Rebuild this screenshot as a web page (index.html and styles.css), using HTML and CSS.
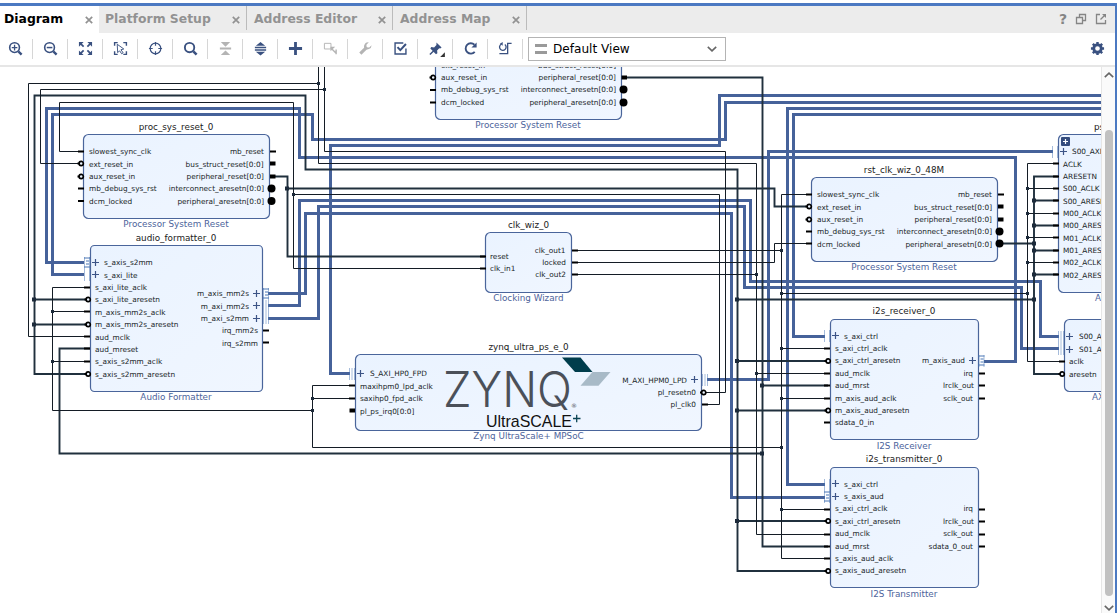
FILE: index.html
```html
<!DOCTYPE html>
<html lang="en">
<head>
<meta charset="utf-8">
<title>Diagram</title>
<link rel="stylesheet" href="styles.css">
</head>
<body>
<main class="panel">
  <nav class="tabs">
    <div class="tab tab-active"><span>Diagram</span><svg class="close" viewBox="0 0 8 8"><path d="M.8 .8 7.2 7.2M7.2 .8 .8 7.2"/></svg></div>
    <div class="tab tab-platform"><span>Platform Setup</span><svg class="close" viewBox="0 0 8 8"><path d="M.8 .8 7.2 7.2M7.2 .8 .8 7.2"/></svg></div>
    <div class="tab tab-editor"><span>Address Editor</span><svg class="close" viewBox="0 0 8 8"><path d="M.8 .8 7.2 7.2M7.2 .8 .8 7.2"/></svg></div>
    <div class="tab tab-map"><span>Address Map</span><svg class="close" viewBox="0 0 8 8"><path d="M.8 .8 7.2 7.2M7.2 .8 .8 7.2"/></svg></div>
    <div class="window-tools">
      <b>?</b>
      <svg viewBox="0 0 12 12"><path d="M4.5 4V1.5h6v6H8M1.5 4.5h6v6h-6z"/></svg>
      <svg viewBox="0 0 12 12"><path d="M5 1.5H1.5v9h9V7M5.5 6.5 9.8 2.2"/><path class="solid" d="M7 1h4v4z"/></svg>
    </div>
  </nav>
  <div class="toolbar">
    <span class="tool"><svg viewBox="0 0 16 16"><circle cx="7" cy="7" r="5.2" stroke-width="1.7"/><path d="M4 7h6M7 4v6" stroke-width="1.4"/><path d="m11 11 3.5 3.5" stroke-width="2.5"/></svg></span>
    <span class="tool"><svg viewBox="0 0 16 16"><circle cx="7" cy="7" r="5.2" stroke-width="1.7"/><path d="M4 7h6" stroke-width="1.6"/><path d="m11 11 3.5 3.5" stroke-width="2.5"/></svg></span>
    <span class="tool"><svg viewBox="0 0 16 16"><path d="m2.5 2.5 3.5 3.5M13.5 2.5 10 6M2.5 13.5 6 10M13.5 13.5 10 10" stroke-width="1.8"/><path class="solid" d="M1 1h5L1 6zM15 1v5l-5-5zM1 15v-5l5 5zM15 15h-5l5-5z"/></svg></span>
    <span class="tool"><svg viewBox="0 0 16 16"><path d="M1.7 5V1.7H5M11 1.7h3.3V5M1.7 11v3.3H5M11 14.3h3.3V11" stroke-width="1.5"/><path d="m4.5 3.5 7 5-3 .8 2.3 3.3-1.6 1L7 10.4l-2 2z" stroke-width="1"/></svg></span>
    <span class="tool"><svg viewBox="0 0 16 16"><circle cx="8" cy="8" r="5.7" stroke-width="1.3"/><path d="M8 1v4M8 11v4M1 8h4M11 8h4" stroke-width="1.3"/></svg></span>
    <span class="tool"><svg viewBox="0 0 16 16"><circle cx="7" cy="7" r="5" stroke-width="2"/><path d="m11 11 3.5 3.5" stroke-width="2.7"/></svg></span>
    <span class="tool tool-off"><svg viewBox="0 0 16 16"><path class="solid" d="M3 1h10L8 6zM2 7h12v2H2zM8 10l5 5H3z"/></svg></span>
    <span class="tool"><svg viewBox="0 0 16 16"><path class="solid" d="M8 1l5 4H3zM2 6h12v1.7H2zM2 8.8h12v1.7H2zM3 11.5h10l-5 4z"/></svg></span>
    <span class="tool"><svg viewBox="0 0 16 16"><path d="M8 1v14M1 8h14" stroke-width="3"/></svg></span>
    <span class="tool tool-off"><svg viewBox="0 0 16 16"><path d="M1.5 2.5h7v6h-7z" stroke-width="1"/><path d="m9 8 5 5M14 9v5" stroke-width="1.5"/><path class="solid" d="M8 6h5l-5 5z"/></svg></span>
    <span class="tool tool-off"><svg viewBox="0 0 16 16"><path d="m2.5 13.5 7-7" stroke-width="3.3"/><path class="solid" d="M14.5 4.5 12 7H9V4l2.5-2.6A4.5 4.5 0 0 0 6.7 7.500 4.500 4.500 0 0 0 14.500 4.500z"/></svg></span>
    <span class="tool"><svg viewBox="0 0 16 16"><path d="M11 2.200H2.200v11.600h11.600V8" stroke-width="1.500"/><path d="m4.800 6.500 3 3.200 6-6.500" stroke-width="2.200"/></svg></span>
    <span class="tool"><svg viewBox="0 0 16 16"><path d="M2 14.500 7 9.500" stroke-width="1.500"/><path class="solid" d="m9 1.500 5.500 5.500-1.500 1-1-.3-2.300 2.300.3 3L8.500 14 2.500 8l1-1.500 3 .3L9 4.300z"/><path class="corner" d="M18 12v5h-5z"/></svg></span>
    <span class="tool"><svg viewBox="0 0 16 16"><path d="M12.500 11.500a5.500 5.500 0 1 1-.3-7.500" stroke-width="2"/><path class="solid" d="M14.500 1.500v5.500H9z"/></svg></span>
    <span class="tool"><svg viewBox="0 0 16 16"><path d="M3.300 3.500a3.500 3.500 0 1 0 4 .2M1.500 13.500h8.800v-11h4.200" stroke-width="1.400"/><path class="solid" d="M5 1v4L2 3z"/></svg></span>
    <div class="view-select">
      <i></i><span>Default View</span>
      <svg viewBox="0 0 10 6"><path d="m.8.8 4.200 4L9.200.8"/></svg>
    </div>
    <svg class="gear" viewBox="0 0 16 16"><circle cx="8" cy="8" r="4" stroke-width="3"/><path d="M8 1v2.500M8 12.500V15M1 8h2.500M12.500 8H15M3 3l2 2M11 11l2 2M13 3l-2 2M5 11l-2 2" stroke-width="2.600"/></svg>
  </div>
  <div class="workspace">
    <svg class="diagram" viewBox="0 67 1101 546" width="1101" height="546">
      <defs>
        <linearGradient id="face" x1="0" y1="0" x2="1" y2="1"><stop offset="0" stop-color="#eaf3ff"/><stop offset="1" stop-color="#f0f6ff"/></linearGradient>
        <path id="tick" class="pin" d="M-5 0H1"/>
        <path id="stub" class="pin-bus" d="M-5.500 0H0"/>
        <g id="ring"><path class="pin" d="M-6 0h2"/><circle class="pin-ring" cx="-2.300" cy="0" r="2.100"/></g>
        <circle id="dot" cx="0" cy="0" r="4"/>
        <path id="plus" class="plus" d="M-3.500 0h7M0-3.500v7"/>
        <path id="port" class="dotted" d="M-2.500-5v11M2.500-5v11"/>
        <g id="port3"><path class="dotted" d="M-2.500-5v11M0-5v11M2.500-5v11"/></g>
        <g id="stream"><path class="dotted" d="M-2.500-5v11M2.500-5v11"/><path class="bars" d="M-3-4.500h6M-1-1.500h3M-1 1.500h3M-3 4.500h6"/></g>
      </defs>

      <g class="blocks">
        <rect x="435.500" y="40" width="186" height="79.500" rx="5"/>
        <rect x="83.500" y="134.500" width="186" height="84" rx="5"/>
        <rect x="90.500" y="245.500" width="172" height="146" rx="4"/>
        <rect x="485.500" y="232.500" width="86" height="60" rx="5"/>
        <rect x="355.500" y="354.500" width="346" height="76" rx="5"/>
        <rect x="811.500" y="177.500" width="186" height="84" rx="5"/>
        <rect x="830.500" y="319.500" width="148" height="120" rx="4"/>
        <rect x="830.500" y="467.500" width="148" height="120" rx="4"/>
        <rect x="1058.500" y="134.500" width="120" height="158" rx="5"/>
        <rect x="1064.500" y="319.500" width="120" height="72" rx="5"/>
      </g>

      <g class="bus">
        <path d="M84 262.500H46.500V108.500H299.500V157.500H1015.500V361.500H984"/>
        <path d="M84 274.500H52.500V114.500H312.500V139.500H725.500V102.500H1101"/>
        <path d="M350 373.500H330.500V145.500H719.500V95.500H1101"/>
        <path d="M825 484.500H787.500V108.500H1101"/>
        <path d="M825 336.500H793.500V114.500H1101"/>
        <path d="M707 379.500H768.500V151.500H1053"/>
        <path d="M268 293.500H305.500V213.500H731.500V497.500H825"/>
        <path d="M268 305.500H299.500V200.500H750.500V281.500H1040.500V336.500H1059"/>
        <path d="M268 318.500H318.500V206.500H744.500V287.500H1021.500V348.500H1059"/>
      </g>

      <g class="net">
        <path d="M86 374H34.500V95.500H305.500V169.500H737.500V571H826M34.500 299.500H86M34.500 324.500H86"/>
        <path d="M737.500 299.500H1034.500M737.500 361H826M737.500 410.500H826M737.500 521H826"/>
        <path d="M1058 176.500H1034V374H1060M1034 200.500H1058M1034 225.500H1058M1034 250.500H1058M1034 274.500H1058M1001 243.500H1034"/>
        <path d="M624 77.500H762.500V546.500H828M762.500 385.500H828M90 348.500H59.500V453.500H762.500"/>
        <path d="M272 176.500H287.500V256.500H485M287.500 188.500H774.500V206.500H806"/>
      </g>

      <g class="wire">
        <path d="M90 336.500H28.500V83.500H318.500M318.500 67V163.500H756.500V534.500H830M756.500 373.500H830"/>
        <path d="M324.500 67V151.500H725.500V392.500H706M324.500 89.500H40.500V163.500H80"/>
        <path d="M83 151.500H59.500V102.500H293.500V268.500H485M293.500 194.500H719.500V404.500H702"/>
        <path d="M90 287.500H52.500V410.500H312.500M52.500 311.500H90M52.500 361.500H90M355 385.500H312.500V447.500H781.500M312.500 398.500H355"/>
        <path d="M811 194.500H781.500V558.500H830M572 250.500H781.500M781.500 293.500H1027.500M781.500 348.500H830M781.500 398.500H830M781.500 509.500H830"/>
        <path d="M572 262.500H774.500V243.500H811M572 274.500H756.500"/>
        <path d="M1058 163.500H1027.500V361.500H1064M1027.500 188.500H1058M1027.500 213.500H1058M1027.500 237.500H1058M1027.500 262.500H1058"/>
      </g>

      <path class="joint" d="M318.500 83.500h0M324.500 89.500h0M293.500 194.500h0M52.500 311.500h0M52.500 361.500h0M312.500 398.500h0M312.500 410.500h0M781.500 250.500h0M781.500 293.500h0M781.500 348.500h0M781.500 398.500h0M781.500 447.500h0M781.500 509.500h0M756.500 274.500h0M756.500 373.500h0M1027.500 188.500h0M1027.500 213.500h0M1027.500 237.500h0M1027.500 262.500h0M1027.500 293.500h0"/>
      <path class="joint joint-big" d="M34 299.500h0M34 324.500h0M287 188.500h0M737 299.500h0M737 361h0M737 410.500h0M737 521h0M762 385.500h0M762 453.500h0M1034 200.500h0M1034 225.500h0M1034 243.500h0M1034 250.500h0M1034 274.500h0M1034 299.500h0"/>

      <g>
        <use href="#ring" x="435.500" y="77.500"/><use href="#tick" x="435" y="90"/><use href="#tick" x="435" y="102.500"/>
        <use href="#stub" x="627" y="77.500"/><use href="#dot" x="623.500" y="89.500"/><use href="#dot" x="623.500" y="102.500"/>
        <use href="#tick" x="83" y="151.500"/><use href="#ring" x="83.500" y="163.500"/><use href="#ring" x="83.500" y="176.500"/><use href="#tick" x="83" y="188.500"/><use href="#tick" x="83" y="201"/>
        <use href="#tick" x="275" y="151.500"/><use href="#stub" x="275.500" y="163.500"/><use href="#stub" x="275.500" y="176.500"/><use href="#dot" x="271.500" y="188.500"/><use href="#dot" x="271.500" y="201"/>
        <use href="#tick" x="811" y="194.500"/><use href="#ring" x="811.500" y="206.500"/><use href="#ring" x="811.500" y="219.500"/><use href="#tick" x="811" y="231.500"/><use href="#tick" x="811" y="243.500"/>
        <use href="#tick" x="1003" y="194.500"/><use href="#stub" x="1003.500" y="206.500"/><use href="#stub" x="1003.500" y="219.500"/><use href="#dot" x="999.500" y="231.500"/><use href="#dot" x="999.500" y="243.500"/>
        <use href="#tick" x="89" y="287.500"/><use href="#ring" x="90.500" y="299.500"/><use href="#tick" x="89" y="311.500"/><use href="#ring" x="90.500" y="324.500"/><use href="#tick" x="89" y="336.500"/><use href="#tick" x="89" y="348.500"/><use href="#tick" x="89" y="361.500"/><use href="#ring" x="90.500" y="374"/>
        <use href="#tick" x="268" y="330.500"/><use href="#tick" x="268" y="342.500"/>
        <use href="#tick" x="485" y="256.500"/><use href="#tick" x="485" y="268.500"/><use href="#tick" x="577" y="250.500"/><use href="#tick" x="577" y="262.500"/><use href="#tick" x="577" y="274.500"/>
        <use href="#tick" x="354" y="385.500"/><use href="#tick" x="354" y="398.500"/><use href="#stub" x="355" y="410.500"/><use href="#ring" x="706" y="392.500"/><use href="#tick" x="707" y="404.500"/>
        <use href="#tick" x="829" y="348.500"/><use href="#ring" x="830.500" y="361"/><use href="#tick" x="829" y="373.500"/><use href="#tick" x="829" y="385.500"/><use href="#tick" x="829" y="398.500"/><use href="#ring" x="830.500" y="410.500"/><use href="#tick" x="829" y="422.500"/>
        <use href="#tick" x="984" y="373.500"/><use href="#tick" x="984" y="385.500"/><use href="#tick" x="984" y="398.500"/>
        <use href="#tick" x="829" y="509.500"/><use href="#ring" x="830.500" y="521"/><use href="#tick" x="829" y="534.500"/><use href="#tick" x="829" y="546.500"/><use href="#tick" x="829" y="558.500"/><use href="#ring" x="830.500" y="571"/>
        <use href="#tick" x="984" y="509.500"/><use href="#tick" x="984" y="521.500"/><use href="#tick" x="984" y="534.500"/><use href="#tick" x="984" y="546.500"/>
        <use href="#tick" x="1058" y="163.500"/><use href="#tick" x="1058" y="176.500"/><use href="#tick" x="1058" y="188.500"/><use href="#tick" x="1058" y="200.500"/><use href="#tick" x="1058" y="213.500"/><use href="#tick" x="1058" y="225.500"/><use href="#tick" x="1058" y="237.500"/><use href="#tick" x="1058" y="250.500"/><use href="#tick" x="1058" y="262.500"/><use href="#tick" x="1058" y="274.500"/>
        <use href="#tick" x="1064" y="361.500"/><use href="#ring" x="1064.500" y="374"/>
      </g>
      <g>
        <use href="#stream" x="87" y="262.500"/><use href="#port" x="87" y="274.500"/><use href="#plus" x="95.500" y="262.500"/><use href="#plus" x="95.500" y="274.500"/>
        <use href="#stream" x="266" y="293.500"/><use href="#port3" x="266" y="305.500"/><use href="#port3" x="266" y="317.500"/><use href="#plus" x="256.500" y="293.500"/><use href="#plus" x="256.500" y="305.500"/><use href="#plus" x="256.500" y="318.500"/>
        <use href="#port3" x="352" y="373.500"/><use href="#plus" x="360.500" y="373.500"/><use href="#port3" x="705" y="379.500"/><use href="#plus" x="694.500" y="379.500"/>
        <use href="#port" x="827" y="335.500"/><use href="#plus" x="835.500" y="335.500"/><use href="#stream" x="981.500" y="360.500"/><use href="#plus" x="972.500" y="360.500"/>
        <use href="#port" x="827" y="484.500"/><use href="#plus" x="835.500" y="483.500"/><use href="#stream" x="827" y="496.500"/><use href="#plus" x="835.500" y="496.500"/>
        <use href="#port" x="1055" y="151.500"/><use href="#plus" x="1063.500" y="151.500"/>
        <use href="#port3" x="1061" y="336.500"/><use href="#port3" x="1061" y="348.500"/><use href="#plus" x="1069.500" y="336.500"/><use href="#plus" x="1069.500" y="349.500"/>
        <rect class="expand" x="1061" y="137" width="9" height="9" rx="1"/><path class="expand-plus" d="M1063 141.500h5M1065.500 139v5"/>
      </g>

      <g class="name">
        <text x="176" y="130">proc_sys_reset_0</text><text x="176" y="241">audio_formatter_0</text><text x="528.500" y="228">clk_wiz_0</text><text x="528.500" y="350">zynq_ultra_ps_e_0</text><text x="904" y="173">rst_clk_wiz_0_48M</text><text x="904" y="314">i2s_receiver_0</text><text x="904" y="462">i2s_transmitter_0</text><text class="from" x="1094" y="130">ps8_0_axi_periph</text>
      </g>
      <g class="kind">
        <text x="528" y="128">Processor System Reset</text><text x="176" y="227">Processor System Reset</text><text x="176" y="400">Audio Formatter</text><text x="528.500" y="301">Clocking Wizard</text><text x="528.500" y="439">Zynq UltraScale+ MPSoC</text><text x="904" y="270">Processor System Reset</text><text x="904" y="449">I2S Receiver</text><text x="904" y="597">I2S Transmitter</text><text class="from" x="1095" y="301">AXI Interconnect</text><text class="from" x="1092" y="400">AXI SmartConnect</text>
      </g>
      <g class="label">
        <text x="441" y="68">ext_reset_in</text><text x="441" y="80">aux_reset_in</text><text x="441" y="92">mb_debug_sys_rst</text><text x="441" y="105">dcm_locked</text>
        <text x="89" y="154">slowest_sync_clk</text><text x="89" y="167">ext_reset_in</text><text x="89" y="179">aux_reset_in</text><text x="89" y="191">mb_debug_sys_rst</text><text x="89" y="204">dcm_locked</text>
        <text x="817" y="197">slowest_sync_clk</text><text x="817" y="210">ext_reset_in</text><text x="817" y="222">aux_reset_in</text><text x="817" y="234">mb_debug_sys_rst</text><text x="817" y="247">dcm_locked</text>
        <text x="104" y="265">s_axis_s2mm</text><text x="104" y="278">s_axi_lite</text><text x="95" y="290">s_axi_lite_aclk</text><text x="95" y="302">s_axi_lite_aresetn</text><text x="95" y="315">m_axis_mm2s_aclk</text><text x="95" y="327">m_axis_mm2s_aresetn</text><text x="95" y="340">aud_mclk</text><text x="95" y="352">aud_mreset</text><text x="95" y="364">s_axis_s2mm_aclk</text><text x="95" y="377">s_axis_s2mm_aresetn</text>
        <text x="490" y="259">reset</text><text x="490" y="271">clk_in1</text>
        <text x="370" y="376">S_AXI_HP0_FPD</text><text x="360" y="389">maxihpm0_lpd_aclk</text><text x="360" y="401">saxihp0_fpd_aclk</text><text x="360" y="414">pl_ps_irq0[0:0]</text>
        <text x="844" y="339">s_axi_ctrl</text><text x="835" y="351">s_axi_ctrl_aclk</text><text x="835" y="363">s_axi_ctrl_aresetn</text><text x="835" y="376">aud_mclk</text><text x="835" y="388">aud_mrst</text><text x="835" y="401">m_axis_aud_aclk</text><text x="835" y="413">m_axis_aud_aresetn</text><text x="835" y="425">sdata_0_in</text>
        <text x="844" y="487">s_axi_ctrl</text><text x="844" y="499">s_axis_aud</text><text x="835" y="511">s_axi_ctrl_aclk</text><text x="835" y="524">s_axi_ctrl_aresetn</text><text x="835" y="536">aud_mclk</text><text x="835" y="549">aud_mrst</text><text x="835" y="561">s_axis_aud_aclk</text><text x="835" y="573">s_axis_aud_aresetn</text>
        <text x="1072" y="154">S00_AXI</text><text x="1063" y="167">ACLK</text><text x="1063" y="179">ARESETN</text><text x="1063" y="191">S00_ACLK</text><text x="1063" y="204">S00_ARESETN</text><text x="1063" y="216">M00_ACLK</text><text x="1063" y="228">M00_ARESETN</text><text x="1063" y="241">M01_ACLK</text><text x="1063" y="253">M01_ARESETN</text><text x="1063" y="265">M02_ACLK</text><text x="1063" y="278">M02_ARESETN</text>
        <text x="1079" y="339">S00_AXI</text><text x="1079" y="352">S01_AXI</text><text x="1069" y="364">aclk</text><text x="1069" y="377">aresetn</text>
      </g>
      <g class="label label-out">
        <text x="616" y="68">bus_struct_reset[0:0]</text><text x="616" y="80">peripheral_reset[0:0]</text><text x="616" y="92">interconnect_aresetn[0:0]</text><text x="616" y="105">peripheral_aresetn[0:0]</text>
        <text x="264" y="154">mb_reset</text><text x="263.500" y="167">bus_struct_reset[0:0]</text><text x="264" y="179">peripheral_reset[0:0]</text><text x="264" y="191">interconnect_aresetn[0:0]</text><text x="264" y="204">peripheral_aresetn[0:0]</text>
        <text x="992" y="197">mb_reset</text><text x="992" y="210">bus_struct_reset[0:0]</text><text x="992" y="222">peripheral_reset[0:0]</text><text x="992" y="234">interconnect_aresetn[0:0]</text><text x="992" y="247">peripheral_aresetn[0:0]</text>
        <text x="249" y="296">m_axis_mm2s</text><text x="249" y="309">m_axi_mm2s</text><text x="249" y="321">m_axi_s2mm</text><text x="258" y="333">irq_mm2s</text><text x="258" y="346">irq_s2mm</text>
        <text x="565.500" y="253">clk_out1</text><text x="566" y="265">locked</text><text x="566" y="277">clk_out2</text>
        <text x="687" y="383">M_AXI_HPM0_LPD</text><text x="696" y="395">pl_resetn0</text><text x="696" y="407">pl_clk0</text>
        <text x="965" y="363">m_axis_aud</text><text x="973" y="376">irq</text><text x="974" y="388">lrclk_out</text><text x="973" y="401">sclk_out</text>
        <text x="973" y="511">irq</text><text x="974" y="524">lrclk_out</text><text x="973" y="536">sclk_out</text><text x="973" y="549">sdata_0_out</text>
      </g>

      <g>
        <text class="zynq" x="443" y="407" textLength="129" lengthAdjust="spacingAndGlyphs">ZYNQ</text>
        <text class="registered" x="571" y="408">®</text>
        <text class="ultrascale" x="486" y="427" textLength="86" lengthAdjust="spacingAndGlyphs">UltraSCALE</text>
        <path class="mark-plus" d="M573 418.500h7.500M576.700 414.700v7.500"/>
        <path class="mark-dark" d="M562 357.500h18.500l12 14.500h-17.500z"/>
        <path class="mark-light" d="M592.500 372h18l-12 13.700h-18z"/>
      </g>
    </svg>
    <div class="scrollbar">
      <svg viewBox="0 0 10 6"><path d="m.8 5.200 4.200-4 4.200 4"/></svg>
      <i></i>
      <svg viewBox="0 0 10 6"><path d="m.8.8 4.200 4L9.200.8"/></svg>
    </div>
  </div>
</main>
</body>
</html>
```
FILE: styles.css
```css
* { box-sizing: border-box; }
body {
  margin: 0;
  background: #fff;
  font-family: "DejaVu Sans", sans-serif;
  overflow: hidden;
}
svg { display: block; fill: none; }
.panel {
  display: flex;
  flex-direction: column;
  width: 1117px;
  height: 610px;
  margin-top: 3px;
  border-top: 3px solid #4b79c2;
  border-right: 2px solid #4b79c2;
}

.tabs {
  display: flex;
  flex: 0 0 27px;
  align-items: flex-start;
  background: #ececec;
}
.tab {
  display: flex;
  align-items: center;
  justify-content: space-between;
  height: 24px;
  padding: 0 6px 0 7px;
  border-right: 1px solid #bbb;
  color: #929292;
  font-size: 12.400px;
  font-weight: bold;
  white-space: nowrap;
}
.tab-active {
  width: 99px;
  height: 27px;
  padding: 0 6px 3px 4px;
  border: 0;
  background: #fff;
  color: #000;
}
.tab-platform { width: 148px; padding-left: 6px; }
.tab-editor { width: 146px; }
.tab-map { width: 134px; }
.close { width: 8px; height: 8px; margin-top: 3px; stroke: #929292; stroke-width: 1.700; }
.window-tools {
  display: flex;
  gap: 8px;
  align-items: center;
  height: 26px;
  margin-left: auto;
  margin-right: 8px;
  color: #858585;
  font-size: 14px;
}
.window-tools svg { width: 12px; height: 12px; stroke: #858585; stroke-width: 1.300; }
.window-tools .solid { fill: #858585; stroke: none; }

.toolbar {
  display: flex;
  flex: 0 0 34px;
  align-items: center;
  padding-bottom: 1px;
  border-bottom: 2px solid #e6e6e6;
}
.tool {
  display: flex;
  align-items: center;
  justify-content: center;
  width: 35px;
  height: 20px;
  border-right: 1px solid #d6d6d6;
}
.tool:first-child { width: 33px; padding-right: 2px; }
.tool svg, .gear { width: 15px; height: 15px; overflow: visible; stroke: #3a5180; }
.tool .solid { fill: #3a5180; stroke: none; }
.tool .corner { fill: #333; stroke: none; }
.tool-off svg { stroke: #b4b4b4; }
.tool-off .solid { fill: #b4b4b4; }
.view-select {
  display: flex;
  align-items: center;
  width: 198px;
  height: 24px;
  margin-left: 5px;
  padding: 0 8px 0 6px;
  border: 1px solid #b4b4b4;
  font-size: 12.100px;
}
.view-select i { width: 12px; height: 10px; margin-right: 6px; border: solid #9a9a9a; border-width: 3px 0; }
.view-select svg { width: 10px; height: 6px; margin-left: auto; stroke: #666; stroke-width: 1.600; }
.gear { margin-left: auto; margin-right: 10px; }

.workspace { display: flex; flex: 1; min-height: 0; }
.diagram { flex: none; }
.scrollbar {
  display: flex;
  flex: 1;
  flex-direction: column;
  align-items: center;
  gap: 9px;
  padding: 5px 0 2px 1px;
  border-left: 1px solid #e6e6e6;
  background: #fafafa;
}
.scrollbar svg { width: 10px; height: 6px; stroke: #666; stroke-width: 1.600; }
.scrollbar i { flex: 1; width: 8px; margin-top: 43px; border-radius: 4px; background: #c1c1c1; }

.blocks rect { fill: url(#face); stroke: #4a659b; stroke-width: 1.200; }
.bus { stroke: #46629a; stroke-width: 3; }
.net { stroke: #20303d; stroke-width: 1.900; }
.wire { stroke: #141c25; stroke-width: 1; }
.joint { stroke: #1c2a3a; stroke-width: 3; stroke-linecap: square; stroke-width: 3; }
.joint-big { stroke-width: 4; }
.pin { stroke: #000; stroke-width: 2; }
.pin-bus { stroke: #000; stroke-width: 4; }
.pin-ring { fill: #edf5ff; stroke: #000; stroke-width: 1.700; }
#dot { fill: #000; }
.plus { stroke: #3c5486; stroke-width: 1.200; }
.dotted { stroke: #4a77b5; stroke-width: 1; stroke-dasharray: 1 1; }
.bars { stroke: #4a77b5; stroke-width: 1; }
.expand { fill: #344c7d; }
.expand-plus { stroke: #fff; stroke-width: 1.200; }

.name { fill: #1a1a1a; font-size: 8.800px; text-anchor: middle; }
.kind { fill: #4d649b; font-size: 8.800px; text-anchor: middle; }
.from { text-anchor: start; }
.label { fill: #171d26; font-size: 7.350px; }
.label-out { text-anchor: end; }
.zynq { fill: #4b5059; font-family: Inter, sans-serif; font-size: 49px; font-weight: 300; }
.registered { fill: #4b5059; font-size: 6px; }
.ultrascale { fill: #111; font-family: "Liberation Sans", sans-serif; font-size: 17px; }
.mark-plus { stroke: #0b4554; stroke-width: 1.300; }
.mark-dark { fill: #003d4c; }
.mark-light { fill: #a8bac7; }
```
